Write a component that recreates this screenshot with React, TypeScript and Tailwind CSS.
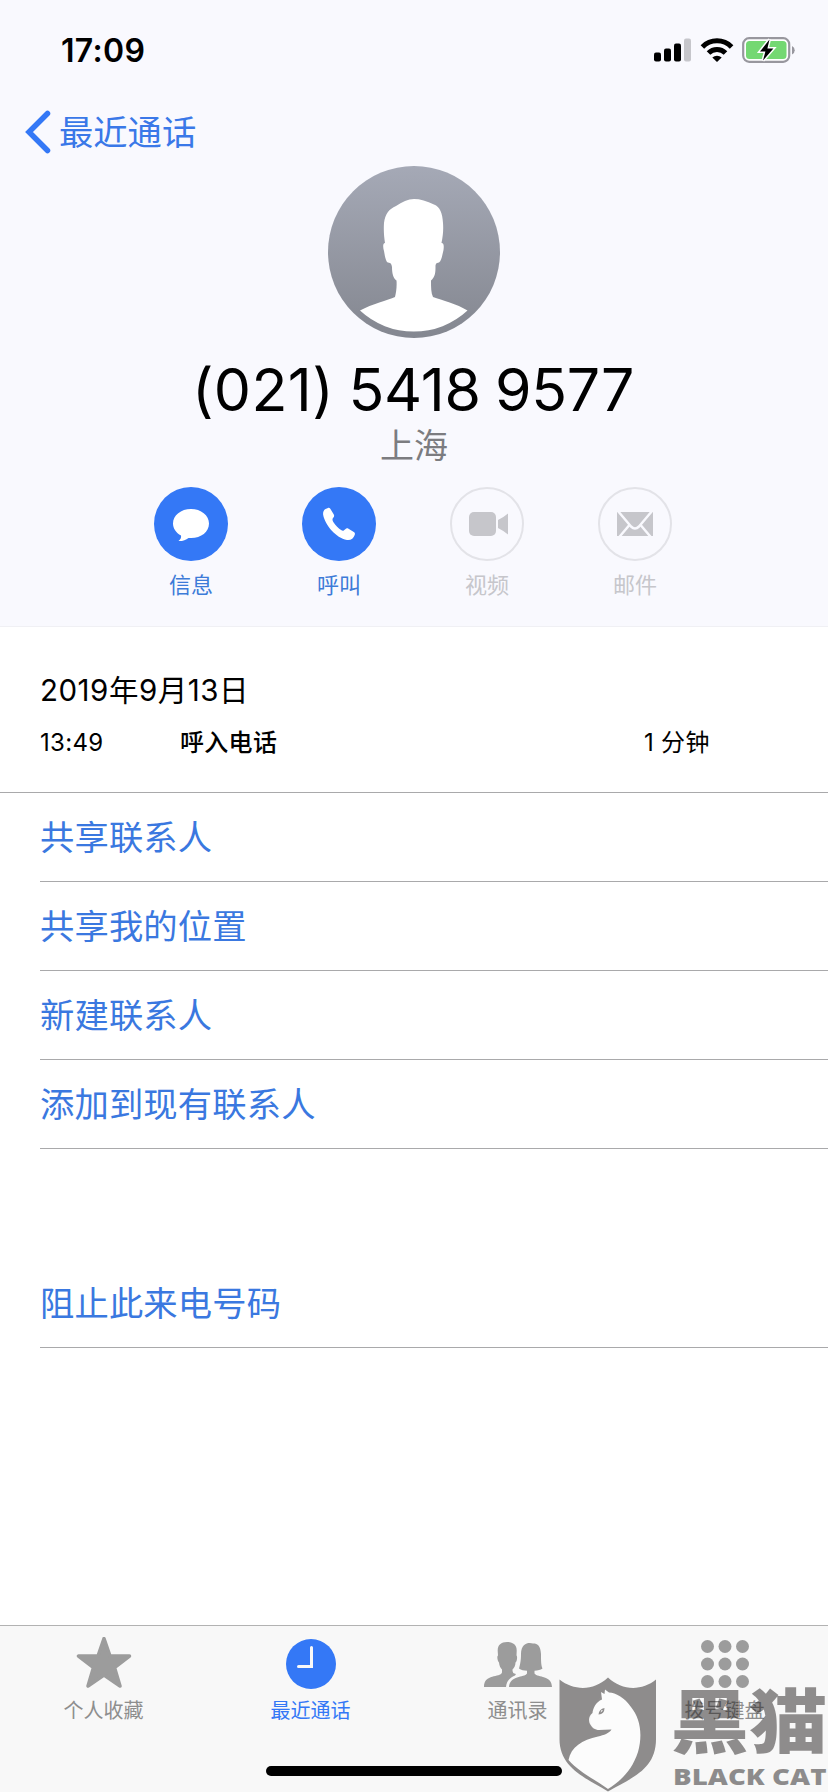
import React from "react";

const Signal = () => (
  <svg className="h-6 w-[38px]" viewBox="0 0 38 24">
    <rect x="0" y="14.5" width="7" height="9" rx="2" />
    <rect x="10" y="10.5" width="7" height="13" rx="2" />
    <rect x="20" y="5.5" width="7" height="18" rx="2" />
    <rect x="30" y="0.5" width="7" height="23" rx="2" fill="#c6c6cb" />
  </svg>
);

const Wifi = () => (
  <svg className="h-6 w-[34px]" viewBox="0 0 34 24">
    <g fill="none" stroke="#000" strokeWidth="5">
      <path d="M2.4 8.9a20.6 20.6 0 0 1 29.2 0" />
      <path d="M8.5 15a12 12 0 0 1 17 0" />
    </g>
    <path d="M17 24l-4.7-4.5a7 7 0 0 1 9.4 0z" />
  </svg>
);

const Battery = () => (
  <svg className="h-[26px] w-[54px]" viewBox="0 0 54 26">
    <rect x="1.2" y="1.2" width="46" height="23.6" rx="6" fill="#fff" stroke="#98979e" strokeWidth="2.2" />
    <rect x="4" y="4" width="40.5" height="18" rx="3.5" fill="#74d872" />
    <path d="M50 9v8.4a4.6 4.6 0 0 0 0-8.4z" fill="#98979e" />
    <path d="M27.5 2.5L18 14.500h5.400L21 23.500l10.400-12h-6z" fill="#000" stroke="#fff" strokeWidth="3" paintOrder="stroke" />
  </svg>
);

const Avatar = () => (
  <svg className="h-[172px] w-[172px]" viewBox="0 0 172 172">
    <defs>
      <linearGradient id="avatar" x1="0" y1="0" x2="0" y2="1">
        <stop offset="0" stopColor="#a5a9b6" />
        <stop offset="1" stopColor="#848790" />
      </linearGradient>
    </defs>
    <circle cx="86" cy="86" r="86" fill="url(#avatar)" />
    <path
      fill="#fff"
      d="M86 33C80 33 74 36 68 40C61 43 57 48 56 57C55.500 64 56 71 57 77C54.500 77 55 82 56 85C57 91 58 96 60 96.500C63 97 63.500 98 64 101C64 107 65 112 68.500 114.500C69 121 68 127 67 131C60 134 44 138 32 144.500A79 79 0 0 0 139.500 144.500C129 138 114 134 105 131C103 127 103 121 103 114.500C107 111 107.500 107 107.500 101C107.500 98 108 97 111 96.500C113.500 95 114 90 115.500 84C116 80 116 77 113.500 77C115 70 115.500 64 115 57C114.500 47 112 41 106 38.500C99 35 92 33 86 33Z"
    />
  </svg>
);

const Bubble = () => (
  <svg className="h-[74px] w-[74px]" viewBox="0 0 74 74" fill="#fff">
    <path d="M37 22C27 22 19 28.300 19 36.500C19 41.500 22 45.800 27 48.500C27.500 50.500 26.500 52.500 24.500 54C28.500 54.200 32 52.800 34.500 50.900C46 52 55 45.500 55 36.500C55 28.300 47 22 37 22Z" />
  </svg>
);

const Phone = () => (
  <svg className="h-[74px] w-[74px]" viewBox="0 0 74 74" fill="#fff">
    <path d="M23.500 22L26 20.900C27 20.600 27.800 21 28.300 21.800L31.800 27.500C32.400 28.600 32.200 29.600 31.400 30.500C30 32 30.400 33.500 31.300 35C33.500 38.500 36.500 41.300 39.500 43.300C41 44.200 42 43.500 43.300 42.200C44.300 41.100 45.300 41 46.500 41.700L51.800 45C53 45.800 53.200 46.600 52.700 48C51.500 51.500 49 53.500 45 53C34 51 23 38 21.200 28C20.800 25.500 21.500 23.200 23.500 22Z" />
  </svg>
);

const Video = () => (
  <svg className="h-[74px] w-[74px]" viewBox="0 0 74 74" fill="#c6c6cb">
    <circle cx="37" cy="37" r="36" fill="none" stroke="#e3e3e8" strokeWidth="2" />
    <rect x="19" y="25" width="27" height="24" rx="5" />
    <path d="M48 33Q54 30 58 26.500V47.500Q54 44 48 41Z" />
  </svg>
);

const Mail = () => (
  <svg className="h-[74px] w-[74px]" viewBox="0 0 74 74">
    <circle cx="37" cy="37" r="36" fill="none" stroke="#e3e3e8" strokeWidth="2" />
    <rect x="19" y="25" width="36" height="24" fill="#c6c6cb" />
    <path d="M19.500 23.500L33 39.500Q37 43.500 41 39.500L54.500 23.500M20 51.500L31 38.500M54 51.500L43 38.500" fill="none" stroke="#f9f9fe" strokeWidth="2.500" />
  </svg>
);

const Star = () => (
  <svg className="h-[54px] w-[56px]" viewBox="0 0 56 54">
    <path
      d="M28 1.500L34 19H53.500L38.500 30.500L44 49L28 38L12 49L17.500 30.500L2.500 19H22Z"
      fill="#9c9c9c"
      stroke="#9c9c9c"
      strokeWidth="3.500"
      strokeLinejoin="round"
    />
  </svg>
);

const Clock = () => (
  <svg className="h-[50px] w-[50px]" viewBox="0 0 50 50">
    <circle cx="25" cy="25" r="25" fill="#3478f6" />
    <path d="M25.500 8.500V27.500H12.500" fill="none" stroke="#f8f8f8" strokeWidth="3" strokeLinecap="round" />
  </svg>
);

const People = () => (
  <svg className="h-[46px] w-[68px]" viewBox="0 0 68 46" fill="#9c9c9c">
    <path d="M23 1C17 1 13.500 4 13.700 10L14 14.500C12.800 15 13.300 20 15 21.500C15.300 25 16.500 27 18 28.500V31.500C16 37 0 32.500 0 46H22C22.500 40 26 36.500 31 34.500L32 33C29.500 32.500 28.500 32 28.500 28.500C30 27 31.500 25 31.500 21.500C33.300 20 33.500 15 32.500 14.500L32.700 10C33 4 29 1 23 1Z" />
    <path d="M49 2.500C45 1 37 2 37 13C37 20 36 24 35 27.500C37 29.200 40 29.500 43 29.700V32.500C40 37 26 34 25 46H68C68 34 54 37 50.500 32.500V29.700C54 29.500 56.500 29 58.500 27.500C57 24 57 20 57 13C56.500 5 54 2.500 49 2.500Z" />
  </svg>
);

const Keypad = () => (
  <svg className="h-12 w-12" viewBox="0 0 48 48" fill="#9c9c9c">
    {[6.5, 24, 41.5].map((y) => [6.5, 24, 41.5].map((x) => <circle key={`${x}-${y}`} cx={x} cy={y} r="6.500" />))}
  </svg>
);

const Watermark = () => (
  <svg className="absolute bottom-0 right-0 h-[118px] w-[272px]" viewBox="0 0 272 118">
    <path d="M48.500 16L54 18C60 20 68 24 75 33C84 44 87 60 82 78C76 96 66 106 52 114.500C38 105 23 98 12.500 86C15 73 26 66 42 62.500C48 61 53 59.500 55.500 55.500L43 56C34 54 28 46 48.500 16Z" fill="#fff" fillOpacity="0.6" />
    <g fill="#231f20" fillOpacity="0.5">
      <path
        fillRule="evenodd"
        d="M3.500 5.500C18 17 38 17 52 3.500C66 17 86 17 100 5.500V65C100 96 75 104 52 117.500C30 104 3.500 94 3.500 65ZM49 15.500L48.500 20L45 18L46 25.500C40 28 37 34 36.500 39C33 42 32.500 45 33.500 49C36 54 39 56 43 56L55.500 55.500C53 59.500 48 61 42 62.500C26 66 15 73 12.500 86C23 98 38 105 52 115C66 106 76 96 82 78C87 60 84 44 75 33C68 23 60 19 53 18.500Z"
      />
      <path fillRule="evenodd" d="M42.500 40.500Q43 35 48.500 34Q48.500 40 42.500 40.500ZM44.500 38.500L47 36.500L45.500 36Z" />
      <text x="114.5" y="74" fontSize="70" fontWeight="900" textLength="157" lengthAdjust="spacingAndGlyphs" fontFamily="Noto Sans CJK SC, sans-serif">
        黑猫
      </text>
      <text x="117" y="110.500" fontSize="22.500" fontWeight="800" textLength="153.500" lengthAdjust="spacingAndGlyphs" fontFamily="Open Sans, sans-serif">
        BLACK CAT
      </text>
    </g>
  </svg>
);

const contactActions = [
  { label: "信息", icon: <Bubble />, circle: "bg-[#3478f6]", text: "text-[#3d7bd8]" },
  { label: "呼叫", icon: <Phone />, circle: "bg-[#3478f6]", text: "text-[#3d7bd8]" },
  { label: "视频", icon: <Video />, circle: "", text: "text-[#c6c6cb]" },
  { label: "邮件", icon: <Mail />, circle: "", text: "text-[#c6c6cb]" },
];

const tabs = [
  { label: "个人收藏", icon: <Star />, text: "text-[#8e8e8e]" },
  { label: "最近通话", icon: <Clock />, text: "text-[#3478f6]" },
  { label: "通讯录", icon: <People />, text: "text-[#8e8e8e]" },
  { label: "拨号键盘", icon: <Keypad />, text: "text-[#8e8e8e]" },
];

const Row = ({ label }: { label: string }) => (
  <div className="ml-10 flex h-[89px] items-center border-b border-[#a9a9ab] pt-px text-[34.3px] tracking-[0.15px] text-[#3a78e0]">{label}</div>
);

export default function App() {
  return (
    <div className="relative flex h-[1792px] w-[828px] flex-col overflow-hidden bg-white font-['Inter','Noto_Sans_CJK_SC',sans-serif] text-black">
      <header className="flex h-[627px] shrink-0 flex-col border-b border-[#f0f0f4] bg-[#f9f9fe]">
        <div className="flex h-[100px] items-center justify-between pl-[61px] pr-[32px]">
          <span className="pt-px text-[32px] leading-none font-semibold tracking-[0.3px]">17:09</span>
          <div className="flex items-center gap-[8px]">
            <Signal />
            <Wifi />
            <Battery />
          </div>
        </div>
        <div className="flex h-16 items-center gap-[8px] pl-[25px] text-[34.3px] leading-none text-[#3a78e8]">
          <svg className="h-[44px] w-[26px]" viewBox="0 0 26 44">
            <path d="M22.500 3.500L4 22L22.500 40.500" fill="none" stroke="#3478f6" strokeWidth="5.500" strokeLinecap="round" />
          </svg>
          <span className="pt-[3px]">最近通话</span>
        </div>
        <div className="mt-[2px] flex flex-col items-center">
          <Avatar />
          <h1 className="mt-[22px] mr-[2px] h-[60px] text-[59px] leading-[60px] font-normal tracking-[-0.3px] whitespace-nowrap [word-spacing:-2px]">
            <span className="tracking-[0.4px]">(021)</span> 5418 9577
          </h1>
          <p className="mt-[9px] h-[34px] text-[34px] leading-[34px] text-[#7c7c80]">上海</p>
        </div>
        <div className="mt-[24px] flex justify-center gap-[74px] pr-[2px]">
          {contactActions.map((a) => (
            <div key={a.label} className={`flex w-[74px] flex-col items-center gap-[12px] ${a.text}`}>
              <div className={`h-[74px] w-[74px] rounded-full ${a.circle}`}>{a.icon}</div>
              <span className="text-[22px] leading-[24px]">{a.label}</span>
            </div>
          ))}
        </div>
      </header>

      <section className="flex h-[166px] shrink-0 flex-col border-b border-[#a9a9ab] pl-10 pt-[45px]">
        <div className="text-[29.5px] leading-[36px] tracking-[0.5px]">2019年9月13日</div>
        <div className="mt-[19px] flex text-[24px] leading-[32px] tracking-[0.3px]">
          <span className="w-[140px]">13:49</span>
          <span className="w-[464px] font-medium">呼入电话</span>
          <span>1 分钟</span>
        </div>
      </section>

      <main className="flex grow flex-col">
        <Row label="共享联系人" />
        <Row label="共享我的位置" />
        <Row label="新建联系人" />
        <Row label="添加到现有联系人" />
        <div className="h-[110px]" />
        <Row label="阻止此来电号码" />
      </main>

      <nav className="flex h-[167px] shrink-0 flex-col border-t border-[#b2b2b2] bg-[#f8f8f8]">
        <div className="grid grid-cols-4">
          {tabs.map((t) => (
            <div key={t.label} className={`flex flex-col items-center ${t.text}`}>
              <div className="mt-[8px] flex h-[60px] items-center">{t.icon}</div>
              <span className="mt-[5px] text-[20px] leading-[24px]">{t.label}</span>
            </div>
          ))}
        </div>
        <div className="mt-[43px] ml-[266px] h-[10px] w-[296px] rounded-full bg-black" />
      </nav>
      <Watermark />
    </div>
  );
}
